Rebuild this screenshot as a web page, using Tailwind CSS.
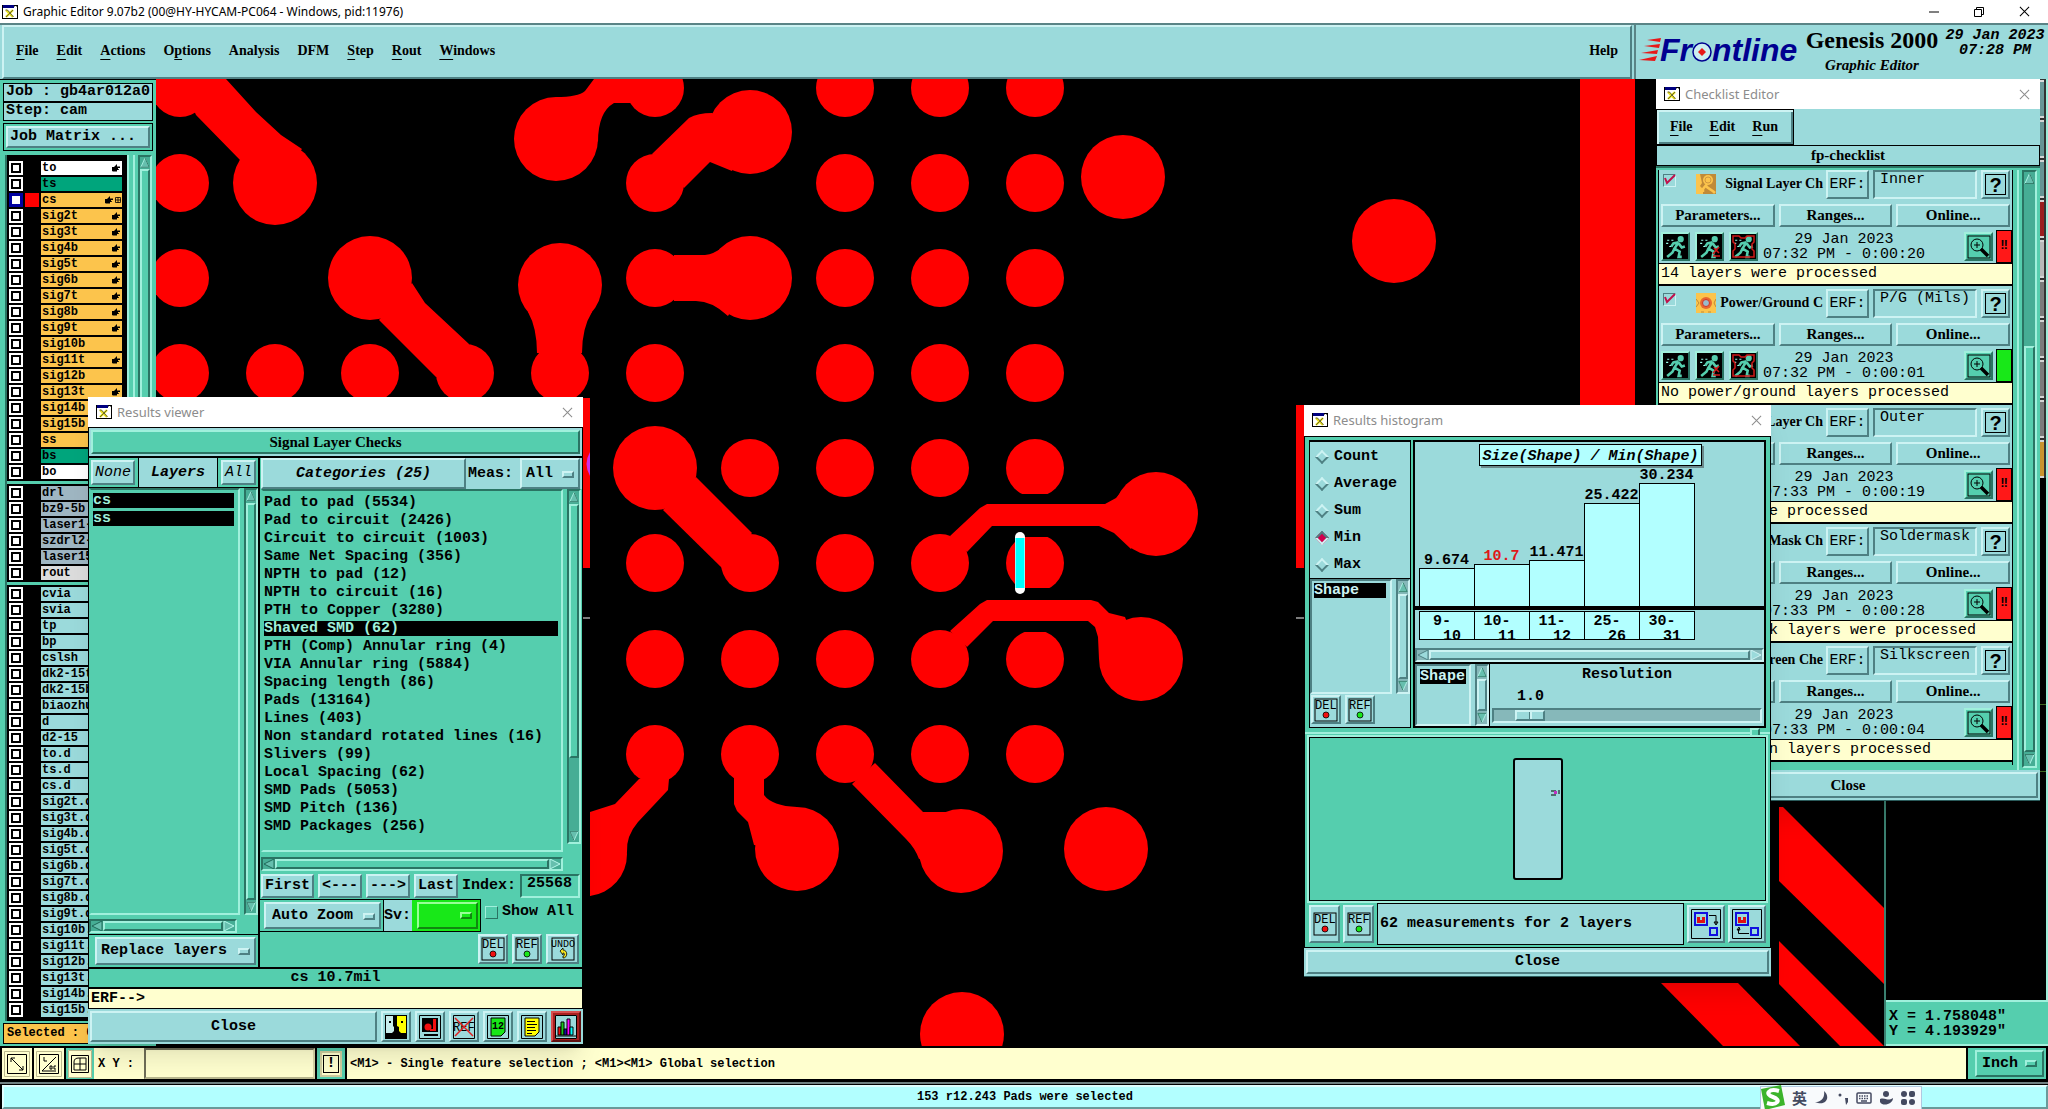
<!DOCTYPE html>
<html lang="en">

<head>
    <meta charset="UTF-8">
    <meta name="viewport" content="width=device-width, initial-scale=1.0">
    <title>Graphic Editor 9.07b2</title>
    <script src="https://cdn.jsdelivr.net/npm/@tailwindcss/browser@4"></script>
</head>

<body class="h-screen overflow-hidden bg-black text-black flex flex-col relative font-['Liberation_Mono',monospace] text-[15px] leading-[18px]">

    <!-- shared icons -->
    <svg class="hidden">
        <symbol id="i-app" viewBox="0 0 16 14">
            <rect x=".5" y=".5" width="15" height="13" fill="#fff" stroke="#000" />
            <rect x="1" y="0" width="11" height="3" fill="#00007f" />
            <rect x="12" y="1" width="1" height="1" fill="#888" /><rect x="14" y="1" width="1" height="1" fill="#888" />
            <path d="M4 5l7 7M11 5l-7 7" stroke="#e8e020" stroke-width="2.4" />
            <path d="M3.500 5h2l6 7M11 5l-7 7" stroke="#333" stroke-width=".7" fill="none" />
        </symbol>
        <symbol id="i-close" viewBox="0 0 12 12">
            <path d="M1 1l10 10M11 1L1 11" stroke="currentColor" stroke-width="1.100" />
        </symbol>
        <symbol id="i-hand" viewBox="0 0 8 8">
            <path d="M0 3h2l3-3v2.500h3v1.500H6v1h.8V6H5v1.500H1L0 7z" />
        </symbol>
        <symbol id="i-del" viewBox="0 0 24 24">
            <rect x="1" y="1" width="22" height="22" fill="none" stroke="#000" />
            <text x="1" y="11" font-size="12" font-weight="normal" font-family="Liberation Mono">DEL</text>
            <circle cx="12" cy="17" r="3" fill="#f01010" stroke="#000" stroke-width=".8" />
        </symbol>
        <symbol id="i-ref" viewBox="0 0 24 24">
            <rect x="1" y="1" width="22" height="22" fill="none" stroke="#000" />
            <text x="1" y="11" font-size="12" font-weight="normal" font-family="Liberation Mono">REF</text>
            <circle cx="12" cy="17" r="3" fill="#18e818" stroke="#000" stroke-width=".8" />
        </symbol>
        <symbol id="i-undo" viewBox="0 0 24 24">
            <rect x="1" y="1" width="22" height="22" fill="none" stroke="#000" />
            <text x="0" y="10" font-size="10" font-weight="normal" font-family="Liberation Mono">UNDO</text>
            <path d="M9 14l3-3v2c5 0 5 8 0 8v-2c2 0 2-3 0-3v2z" fill="#f0e020" stroke="#000" stroke-width=".8" />
        </symbol>
        <symbol id="i-run" viewBox="0 0 24 24">
            <rect width="24" height="24" fill="#000" />
            <g stroke="#55ceae" fill="none" stroke-width="2">
                <circle cx="17" cy="5" r="2" fill="#55ceae" />
                <path d="M15 8l-5 1-2 3M15 8l-4 6 5 3-1 5h3M11 14l-2 4-5 4M15 9l3 4 3-1" stroke-width="2.500" />
            </g>
            <path d="M4 6h2M8 6h2M3 9h2M6 12h2" stroke="#9fe" />
        </symbol>
        <symbol id="i-zoom" viewBox="0 0 24 24">
            <rect x="1" y="1" width="22" height="22" fill="none" stroke="#000" />
            <circle cx="10" cy="10" r="6" fill="none" stroke="#000" />
            <path d="M7 10h6M10 7v6" stroke="#000" />
            <path d="M14 14l7 7" stroke="#000" stroke-width="3.500" />
        </symbol>
        <symbol id="i-copper" viewBox="0 0 20 20">
            <rect width="20" height="20" fill="#c08a38" />
            <path d="M0 0h4l2 9-2 3 3 3v5H0z" fill="#fcc44c" />
            <path d="M7 18v-3l4-5M10 12c2 3 5 3 9 7" stroke="#fcc44c" stroke-width="2.500" fill="none" />
            <circle cx="12" cy="6" r="5" fill="#fcc44c" />
            <circle cx="12" cy="6" r="3" fill="#fcc44c" stroke="#d09840" />
        </symbol>
        <symbol id="i-power" viewBox="0 0 20 20">
            <rect width="20" height="20" fill="#fcc44c" />
            <circle cx="10" cy="10" r="6" fill="#e86830" />
            <circle cx="10" cy="10" r="3.500" fill="#9bc" stroke="#d83020" />
            <path d="M0 6l3 4-3 4M20 6l-2 4 2 4M5 19h3M12 19h3" stroke="#c08a38" fill="none" />
        </symbol>
        <symbol id="i-up" viewBox="0 0 12 14">
            <path d="M6 1L1 12h10z" fill="#66bfae" stroke="#b4f8ea" />
            <path d="M6 1l5 11H1" fill="none" stroke="#1f6a58" />
        </symbol>
    </svg>

    <!-- window title -->
    <header class="h-[23px] shrink-0 bg-white flex items-center pl-[2px] pr-[18px] font-['Noto_Sans',sans-serif] text-[12px]">
        <svg class="w-4 h-[14px] mr-[5px]"><use href="#i-app" /></svg>
        <h1>Graphic Editor 9.07b2 (00@HY-HYCAM-PC064 - Windows, pid:11976)</h1>
        <div class="ml-auto flex items-center gap-[35px]">
            <button aria-label="Minimize"><svg class="w-[10px] h-[10px]"><path d="M0 5h10" stroke="#000" /></svg></button>
            <button aria-label="Restore"><svg class="w-[10px] h-[10px]" fill="none" stroke="#000"><path d="M.5 2.500h7v7h-7zM2.500 2V.5h7v7H8" /></svg></button>
            <button aria-label="Close"><svg class="w-[11px] h-[11px]"><use href="#i-close" /></svg></button>
        </div>
    </header>

    <!-- menu bar and logo -->
    <div class="h-[56px] shrink-0 flex bg-[#9bdadb] border-t-2 border-[#5a8486]">
        <nav class="flex-1 flex items-center gap-[18px] pl-[12px] pr-[12px] pb-[2px] ml-[2px] font-['Liberation_Serif',serif] font-bold text-[14px] border-2 [border-color:#cdf3f3_#4e8083_#4e8083_#cdf3f3]">
            <a href="#"><u class="underline-offset-4">F</u>ile</a>
            <a href="#"><u class="underline-offset-4">E</u>dit</a>
            <a href="#"><u class="underline-offset-4">A</u>ctions</a>
            <a href="#">O<u class="underline-offset-4">p</u>tions</a>
            <a href="#">Analysis</a>
            <a href="#">DFM</a>
            <a href="#"><u class="underline-offset-4">S</u>tep</a>
            <a href="#"><u class="underline-offset-4">R</u>out</a>
            <a href="#"><u class="underline-offset-4">W</u>indows</a>
            <a href="#" class="ml-auto">Help</a>
        </nav>
        <div class="w-[414px] flex pt-[2px] pl-[3px] border-l-2 border-[#5a8486] ml-[2px] font-bold">
            <svg class="w-[163px] h-[40px] mt-[4px]" viewBox="0 0 163 40">
                <g fill="#e81818">
                    <path d="M8 9l14-2-1 4zM5 15l16-2-1 4zM2 22l17-3-1 4zM0 29l18-4-2 5z" />
                </g>
                <g font-family="Liberation Sans" font-weight="bold" font-style="italic" font-size="32" fill="#000090">
                    <text x="21" y="30">Fr</text><text x="73" y="30">ntline</text>
                </g>
                <circle cx="63" cy="21" r="9" fill="#cdeef0" stroke="#000090" stroke-width="1.500" />
                <path d="M63 17l4 4-4 4-4-4z" fill="#e81818" />
            </svg>
            <div class="w-[140px] font-['Liberation_Serif',serif] text-center">
                <p class="text-[24px] leading-[26px]">Genesis 2000</p>
                <p class="text-[15px] italic leading-[24px]">Graphic Editor</p>
            </div>
            <p class="italic leading-[15px] text-center flex-1 pt-[1px]">29 Jan 2023<br>07:28 PM</p>
        </div>
    </div>

    <main class="flex-1 min-h-0 flex">
        <!-- layers -->
        <aside class="w-[156px] shrink-0 bg-[#55ceae] flex flex-col px-[3px] pt-[3px] pb-[2px] border-t border-black font-bold">
            <p class="h-[19px] bg-[#9bdadb] border border-black pl-[2px] whitespace-nowrap leading-[16px]">Job : gb4ar012a0</p>
            <p class="h-[19px] bg-[#9bdadb] border border-black pl-[2px] leading-[16px]">Step: cam</p>
            <div class="mt-[2px] p-[2px] border border-black">
                <button class="w-full h-[22px] text-left pl-[2px] bg-[#9bdadb] border-2 [border-color:#cdf3f3_#4e8083_#4e8083_#cdf3f3] leading-[18px]">Job Matrix ...</button>
            </div>
            <div class="flex-1 min-h-0 flex mt-[4px]">
                <div id="layers" class="w-[122px] overflow-hidden bg-black border-l-2 border-[#2a7463] text-[12px] leading-[14px] pt-[6px] ml-[2px]"></div>
                <div class="w-[8px] border-x-2 border-[#a0f0dc]"></div>
                <div class="w-[14px] ml-[3px] border-2 [border-color:#2a7463_#a0f0dc_#a0f0dc_#2a7463] bg-[#46ad95] flex flex-col">
                    <svg class="h-[12px] w-[10px]"><use href="#i-up" /></svg>
                    <div class="flex-1 bg-[#55ceae] border-2 [border-color:#a0f0dc_#2a7463_#2a7463_#a0f0dc]"></div>
                </div>
            </div>
            <p class="h-[21px] shrink-0 mt-[2px] bg-[#fcc44c] border border-black pl-[3px] text-[12px]">Selected : 0</p>
        </aside>

        <!-- board -->
        <div class="flex-1 min-w-0 bg-black">
            <svg class="w-full h-full block" viewBox="156 79 1728 967" preserveAspectRatio="xMinYMin slice">
                <g fill="#f00">
                    <g id="pads"></g>
                    <path d="M180 79H226L256 112 281 135 302 149 275 183 240 160 196 115z" />
                    <path d="M412 283L425 303 469 344 464 373 436 377 379 320z" />
                    <path d="M528 312Q537 328 537 353H582Q582 328 592 312z" />
                    <path d="M556 97Q578 97 585 91L594 79H655L640 103H614Q598 112 598 142z" />
                    <path d="M652 154L689 118Q698 113 712 113L750 132 732 171 710 162 684 188z" />
                    <path d="M674 255H705Q714 254 723 247L750 278 728 316Q712 301 696 301H674z" />
                    <path d="M696 477L752 533 722 568 663 510z" />
                    <path d="M950 536L980 508 987 504H1105L1116 498 1125 487 1156 514 1131 549 1114 533 1099 526H992L967 552z" />
                    <path d="M950 631L980 604 987 600H1091L1098 602 1109 613 1125 617 1141 659H1099L1098 637 1095 627 1088 621H993L967 647z" />
                    <path d="M639 779L615 804 590 812V896L627 852Q626 836 638 822L668 790 669 779z" />
                    <path d="M590 812a42 42 0 0 1 37 42a42 42 0 0 1-37 42z" />
                    <path d="M734 775V804L737 811 748 822 754 845 797 850V807Q772 806 764 795V775z" />
                    <path d="M875 763L923 812H946L960 851 919 859Q915 848 906 839L852 784z" />
                    <path d="M1580 79h55v400h-55z" />
                    <path d="M583 398h7v170h-7zM1296 405h8v163h-8z" />
                    <path d="M1779 807h4L1884 908V984L1779 881z" />
                    <path d="M1779 941L1884 1046H1840L1779 984z" />
                    <path d="M1661 983h77l62 63h-77z" />
                </g>
                <g fill="#000">
                    <path d="M1010 494h50v6h-50zM1010 531h50v6h-50zM1010 588h50v6h-50zM1010 626h50v6h-50z" />
                </g>
                <path d="M1020 537v52" stroke="#fff" stroke-width="10" stroke-linecap="round" />
                <path d="M1020 538v50" stroke="#0ff" stroke-width="9" />
                <path d="M590 452q-7 12 0 24z" fill="#d030f0" />
                <path d="M583 618h7M1296 618h8" stroke="#fff" />
            </svg>
        </div>

        <!-- toolbox and position -->
        <aside class="w-[164px] shrink-0 flex flex-col border-l-2 border-[#3a8070]">
            <div class="flex-1 border-r-2 border-[#a0f0dc]">
                <div id="tools" class="ml-auto w-[7px] bg-[#333] pt-[1px]"></div>
                <div class="mt-[226px] h-[68px] ml-auto w-3 border-y border-[#3d6a20]"></div>
            </div>
            <div class="h-[46px] shrink-0 bg-[#55ceae] border-y-2 border-[#a0f0dc] pl-[3px] pt-[7px] leading-[15px] font-bold whitespace-pre">X = 1.758048"
Y = 4.193929"</div>
        </aside>
    </main>

    <!-- command line -->
    <div class="h-[38px] shrink-0 bg-black pt-[2px] pb-[3px] pl-[2px] pr-[2px] flex gap-[2px] border-b-2 border-[#6f8080] font-bold text-[12px]">
        <button aria-label="Snap" class="w-[30px] bg-[#ffffcf] p-[2px] flex items-center justify-center"><svg class="w-[26px] h-[26px]" fill="none" stroke="#000"><path d="M.5 .5h25v25H.5z" stroke="#bbb98e" /><path d="M3.500 3.500h19v19h-19zM7 7l12 12M7 11V7h4M15 19h4v-4" /></svg></button>
        <button aria-label="Angle" class="w-[30px] bg-[#ffffcf] p-[2px] flex items-center justify-center"><svg class="w-[26px] h-[26px]" fill="none" stroke="#000"><path d="M.5 .5h25v25H.5z" stroke="#bbb98e" /><path d="M3.500 3.500h19v19h-19zM6 20L20 6M6 20h14M8 6v4h3M14 15h2v3h-2zM20 15h-2v3h2" /></svg></button>
        <button aria-label="Grid" class="w-[28px] bg-[#55ceae] flex items-center justify-center"><svg class="w-[24px] h-[28px] bg-[#ffffcf]" fill="none" stroke="#000"><path d="M.5 .5h23v27H.5z" stroke="#bbb98e" /><path d="M3.500 5.500h17v17h-17zM6 12c0-3 2-4 5-4h7v12H6zM6 14h12M12 8v12" /></svg></button>
        <div class="flex -ml-[2px] bg-[#ffffcf] flex-none w-[221px]">
            <label for="xy" class="w-[48px] pl-[4px] leading-[32px] whitespace-nowrap">X Y :</label>
            <input id="xy" type="text" class="ml-auto w-[171px] bg-[#ffffcf] border-2 [border-color:#6f6e58_#d8d7a8_#b8b78e_#6f6e58] outline-none px-1">
        </div>
        <button aria-label="Message" class="w-[28px] bg-[#55ceae] flex items-center justify-center"><span class="w-[22px] h-[26px] bg-[#ffffcf] border-2 border-[#cfce9f] flex items-center justify-center"><span class="border border-black w-[16px] h-[18px] leading-[16px] text-[15px]">!</span></span></button>
        <p class="flex-1 bg-[#ffffcf] pl-[3px] leading-[32px]">&lt;M1&gt; - Single feature selection ; &lt;M1&gt;&lt;M1&gt; Global selection</p>
        <div class="w-[78px] bg-[#55ceae] p-[2px] pl-[7px] relative">
            <select aria-label="Units" class="appearance-none w-full h-full pl-[5px] font-bold text-[15px] bg-[#55ceae] border-2 [border-color:#a0f0dc_#2a7463_#2a7463_#a0f0dc]"><option>Inch</option></select>
            <span class="absolute right-[9px] top-[12px] w-[12px] h-[7px] border-2 [border-color:#a0f0dc_#2a7463_#2a7463_#a0f0dc]"></span>
        </div>
    </div>
    <footer class="h-[25px] shrink-0 flex relative border-t border-black pl-[2px]">
        <p class="flex-1 bg-[#b2ffff] border-2 [border-color:#e0ffff_#6a9a9a_#6a9a9a_#e0ffff] text-center font-bold text-[12px] leading-[20px]">153 r12.243 Pads were selected</p>
        <div class="absolute right-[126px] top-[1px] h-[24px] w-[162px] bg-[#f8fafc] border border-[#b0c8e0] flex items-center justify-between pl-[31px] pr-[6px] font-['Noto_Sans_CJK_SC',sans-serif] font-bold text-[15px] text-[#444a60]">
            <svg class="absolute -left-[2px] -top-[3px] w-[27px] h-[27px]"><path d="M2 5l20-4 4 20-20 5z" fill="#3cb42c" /><path d="M20 7c-10-3-15 3-6 6s4 9-6 6" fill="none" stroke="#fff" stroke-width="4" /></svg>
            <span>英</span>
            <svg class="w-[14px] h-[14px]" fill="#444a60"><path d="M9 0c7 6 2 16-9 11c7 0 10-5 9-11z" /></svg>
            <svg class="w-[11px] h-[14px]" fill="#444a60"><circle cx="3" cy="4" r="1.500" /><path d="M8 7h3v4l-2 3z" /></svg>
            <svg class="w-[16px] h-[12px]" fill="none" stroke="#444a60" stroke-width="1.500"><rect x="1" y="1" width="14" height="10" rx="1" /><path d="M3 4h10M3 6.500h10" stroke-dasharray="1.500 1" /><path d="M5 9h6" /></svg>
            <svg class="w-[13px] h-[14px]" fill="#444a60"><circle cx="6" cy="3" r="3" /><path d="M0 8c6-2 7 3 13-1c0 6-10 9-13 4z" /></svg>
            <svg class="w-[14px] h-[14px]" fill="#444a60"><circle cx="3" cy="3" r="3" /><rect x="8" y="0" width="6" height="6" rx="2" /><rect x="0" y="8" width="6" height="6" rx="2" /><circle cx="11" cy="11" r="3" /></svg>
        </div>
    </footer>

    <!-- Checklist Editor -->
    <section class="absolute left-[1656px] top-[79px] w-[384px] bg-[#9bdadb] shadow-xl flex flex-col border-b border-[#2a5a5a]">
        <div class="h-[30px] bg-white flex items-center px-2 text-[#8c8c8c] font-['Noto_Sans',sans-serif] text-[13px]">
            <svg class="w-4 h-[14px] mr-[5px]"><use href="#i-app" /></svg>
            <h2>Checklist Editor</h2>
            <button aria-label="Close" class="ml-auto mr-[2px]"><svg class="w-[11px] h-[11px]"><use href="#i-close" /></svg></button>
        </div>
        <nav class="w-[138px] h-[36px] flex items-center gap-[17px] pl-[13px] font-['Liberation_Serif',serif] font-bold text-[14px] border border-black shadow-[inset_2px_2px_#cdf3f3,inset_-2px_-2px_#4e8083]">
            <a href="#"><u class="underline-offset-4">F</u>ile</a>
            <a href="#"><u class="underline-offset-4">E</u>dit</a>
            <a href="#"><u class="underline-offset-4">R</u>un</a>
        </nav>
        <p class="h-[21px] border border-black text-center font-['Liberation_Serif',serif] font-bold leading-[19px]">fp-checklist</p>
        <div class="flex bg-[#55ceae] border-t-2 border-[#2a7463] pt-[2px] pl-[2px] pr-[3px]">
            <div class="flex-1 pb-[5px] border-r-2 border-[#a0f0dc] pr-[4px]">
                <div id="checks" class="border-x border-black"></div>
            </div>
            <div class="w-[15px] ml-[3px] mb-[2px] border-2 [border-color:#2a7463_#a0f0dc_#a0f0dc_#2a7463] bg-[#46ad95] flex flex-col">
                <svg class="h-[14px] w-[11px]"><use href="#i-up" /></svg>
                <div class="h-[160px]"></div>
                <div class="flex-1 bg-[#55ceae] border-2 [border-color:#a0f0dc_#2a7463_#2a7463_#a0f0dc]"></div>
                <svg class="h-[14px] w-[11px] rotate-180"><use href="#i-up" /></svg>
            </div>
        </div>
        <button class="h-[26px] m-[2px] border-2 [border-color:#cdf3f3_#4e8083_#4e8083_#cdf3f3] font-['Liberation_Serif',serif] font-bold leading-[20px]">Close</button>
    </section>

    <!-- Results viewer -->
    <section class="absolute left-[88px] top-[397px] w-[495px] bg-[#9bdadb] shadow-xl flex flex-col font-bold">
        <div class="h-[30px] bg-white flex items-center px-2 text-[#8c8c8c] font-['Noto_Sans',sans-serif] text-[13px] font-normal">
            <svg class="w-4 h-[14px] mr-[5px]"><use href="#i-app" /></svg>
            <h2>Results viewer</h2>
            <button aria-label="Close" class="ml-auto mr-[2px]"><svg class="w-[11px] h-[11px]"><use href="#i-close" /></svg></button>
        </div>
        <div class="border-x border-t border-black p-[2px]">
            <p class="h-[24px] bg-[#55ceae] border-2 [border-color:#a0f0dc_#2a7463_#2a7463_#a0f0dc] text-center font-['Liberation_Serif',serif] leading-[20px]">Signal Layer Checks</p>
        </div>
        <div class="flex border-x border-t-2 border-black h-[511px]">
            <!-- layer list -->
            <div class="w-[171px] shrink-0 flex flex-col bg-[#55ceae] border-r-2 border-black">
                <div class="flex h-[30px] border-b border-black italic">
                    <button class="m-[2px] w-[44px] bg-[#9bdadb] border-2 [border-color:#cdf3f3_#4e8083_#4e8083_#cdf3f3] font-normal">None</button>
                    <p class="flex-1 mx-[1px] border-x border-black bg-[#9bdadb] text-center leading-[29px]">Layers</p>
                    <button class="m-[2px] w-[35px] bg-[#9bdadb] border-2 [border-color:#cdf3f3_#4e8083_#4e8083_#cdf3f3] font-normal">All</button>
                </div>
                <div class="flex flex-1">
                    <ul class="flex-1 pl-[2px] pr-[4px] pt-[3px] space-y-[3px] text-[#a0f0dc] leading-[15px] border-2 [border-color:#2a7463_#a0f0dc_#a0f0dc_#55ceae]">
                        <li class="bg-black">cs</li>
                        <li class="bg-black">ss</li>
                    </ul>
                    <div class="w-[14px] ml-[4px] border-2 [border-color:#2a7463_#a0f0dc_#a0f0dc_#2a7463] bg-[#46ad95] flex flex-col">
                        <svg class="h-[13px] w-[10px]"><use href="#i-up" /></svg>
                        <div class="flex-1 bg-[#55ceae] border-2 [border-color:#a0f0dc_#2a7463_#2a7463_#a0f0dc]"></div>
                        <svg class="h-[13px] w-[10px] rotate-180"><use href="#i-up" /></svg>
                    </div>
                </div>
                <div class="h-[14px] mt-[4px] mb-[1px] mr-[21px] border-2 [border-color:#2a7463_#a0f0dc_#a0f0dc_#2a7463] bg-[#46ad95] flex">
                    <svg class="w-[12px] h-[10px]"><path d="M11 0L1 5l10 5z" fill="#66bfae" stroke="#1f6a58" /></svg>
                    <div class="flex-1 bg-[#55ceae] border-2 [border-color:#a0f0dc_#2a7463_#2a7463_#a0f0dc]"></div>
                    <svg class="w-[12px] h-[10px]"><path d="M1 0l10 5-10 5z" fill="#66bfae" stroke="#b4f8ea" /></svg>
                </div>
                <div class="h-[33px] border-t border-black p-[2px] pl-[6px] relative">
                    <select aria-label="Replace" class="appearance-none w-full h-full pl-[4px] bg-[#9bdadb] border-2 [border-color:#cdf3f3_#4e8083_#4e8083_#cdf3f3]"><option>Replace layers</option></select>
                    <span class="absolute right-[8px] top-[13px] w-[12px] h-[7px] border-2 [border-color:#cdf3f3_#4e8083_#4e8083_#cdf3f3]"></span>
                </div>
            </div>
            <!-- categories -->
            <div class="flex-1 min-w-0 flex flex-col bg-[#55ceae] pl-[1px]">
                <div class="flex h-[31px] bg-[#9bdadb]">
                    <p class="w-[205px] border-2 [border-color:#cdf3f3_#4e8083_#4e8083_#cdf3f3] text-center italic leading-[28px]">Categories (25)</p>
                    <label for="meas" class="pl-[2px] flex-1 leading-[32px]">Meas:</label>
                    <div class="relative w-[60px] mr-[2px]">
                        <select id="meas" class="appearance-none w-full h-full pl-[4px] bg-[#9bdadb] border-2 [border-color:#cdf3f3_#4e8083_#4e8083_#cdf3f3]"><option>All</option></select>
                        <span class="absolute right-[6px] top-[13px] w-[12px] h-[7px] border-2 [border-color:#cdf3f3_#4e8083_#4e8083_#cdf3f3]"></span>
                    </div>
                </div>
                <div class="flex flex-1">
                    <ul id="categories" class="flex-1 pl-[1px] pr-[3px] pt-[4px] border-2 [border-color:#2a7463_#a0f0dc_#a0f0dc_#55ceae] whitespace-nowrap"></ul>
                    <div class="w-[14px] ml-[4px] mr-[1px] mb-[8px] border-2 [border-color:#2a7463_#a0f0dc_#a0f0dc_#2a7463] bg-[#46ad95] flex flex-col">
                        <svg class="h-[13px] w-[10px]"><use href="#i-up" /></svg>
                        <div class="h-[254px] bg-[#55ceae] border-2 [border-color:#a0f0dc_#2a7463_#2a7463_#a0f0dc]"></div>
                        <svg class="h-[13px] w-[10px] rotate-180 mt-auto"><use href="#i-up" /></svg>
                    </div>
                </div>
                <div class="h-[14px] mt-[5px] mr-[19px] border-2 [border-color:#2a7463_#a0f0dc_#a0f0dc_#2a7463] bg-[#46ad95] flex">
                    <svg class="w-[12px] h-[10px]"><path d="M11 0L1 5l10 5z" fill="#66bfae" stroke="#1f6a58" /></svg>
                    <div class="flex-1 bg-[#55ceae] border-2 [border-color:#a0f0dc_#2a7463_#2a7463_#a0f0dc]"></div>
                    <svg class="w-[12px] h-[10px]"><path d="M1 0l10 5-10 5z" fill="#66bfae" stroke="#b4f8ea" /></svg>
                </div>
                <div class="flex gap-[4px] h-[24px] mt-[3px] pr-[2px]">
                    <button class="w-[53px] bg-[#9bdadb] border-2 [border-color:#cdf3f3_#4e8083_#4e8083_#cdf3f3]">First</button>
                    <button class="w-[44px] bg-[#9bdadb] border-2 [border-color:#cdf3f3_#4e8083_#4e8083_#cdf3f3]">&lt;---</button>
                    <button class="w-[44px] bg-[#9bdadb] border-2 [border-color:#cdf3f3_#4e8083_#4e8083_#cdf3f3]">---&gt;</button>
                    <button class="w-[44px] bg-[#9bdadb] border-2 [border-color:#cdf3f3_#4e8083_#4e8083_#cdf3f3]">Last</button>
                    <label for="index" class="leading-[24px]">Index:</label>
                    <input id="index" type="text" value="25568" class="ml-auto w-[60px] pl-[5px] pb-[4px] bg-[#55ceae] border-2 [border-color:#2a7463_#a0f0dc_#a0f0dc_#2a7463] leading-[18px]">
                </div>
                <div class="flex h-[33px] mt-[1px]">
                    <div class="flex border border-black w-[222px] -ml-[2px]">
                        <div class="relative w-[124px] p-[2px] pl-[4px] border-r border-black">
                            <select aria-label="Zoom mode" class="appearance-none w-full h-full pl-[6px] bg-[#9bdadb] border-2 [border-color:#cdf3f3_#4e8083_#4e8083_#cdf3f3]"><option>Auto Zoom</option></select>
                            <span class="absolute right-[8px] top-[13px] w-[12px] h-[7px] border-2 [border-color:#cdf3f3_#4e8083_#4e8083_#cdf3f3]"></span>
                        </div>
                        <label for="sv" class="w-[28px] bg-[#9bdadb] leading-[31px]">Sv:</label>
                        <div class="relative flex-1 bg-[#18e818] p-[2px] pl-[5px]">
                            <select id="sv" class="appearance-none w-full h-full bg-[#18e818] border-2 [border-color:#98ff98_#108810_#108810_#98ff98]"><option></option></select>
                            <span class="absolute right-[8px] top-[12px] w-[12px] h-[7px] border-2 [border-color:#98ff98_#108810_#108810_#98ff98]"></span>
                        </div>
                    </div>
                    <label class="flex items-center h-[26px] pl-[4px] gap-[4px] whitespace-nowrap"><input type="checkbox" class="appearance-none w-[13px] h-[13px] border [border-color:#a0f0dc_#2a7463_#2a7463_#a0f0dc]">Show All</label>
                </div>
                <div class="flex justify-end gap-[4px] pr-[3px] mt-[2px] h-[33px]">
                    <button aria-label="Delete" class="w-[30px] h-[30px] flex items-center justify-center bg-[#9bdadb] border-2 [border-color:#cdf3f3_#4e8083_#4e8083_#cdf3f3]"><svg class="w-[24px] h-[24px]"><use href="#i-del" /></svg></button>
                    <button aria-label="Reference" class="w-[30px] h-[30px] flex items-center justify-center bg-[#9bdadb] border-2 [border-color:#cdf3f3_#4e8083_#4e8083_#cdf3f3]"><svg class="w-[24px] h-[24px]"><use href="#i-ref" /></svg></button>
                    <button aria-label="Undo" class="w-[33px] h-[30px] flex items-center justify-center bg-[#9bdadb] border-2 [border-color:#cdf3f3_#4e8083_#4e8083_#cdf3f3]"><svg class="w-[24px] h-[24px]"><use href="#i-undo" /></svg></button>
                </div>
            </div>
        </div>
        <p class="h-[22px] bg-[#55ceae] border-x border-y-2 border-black text-center leading-[18px]">cs 10.7mil</p>
        <p class="h-[20px] bg-[#ffffcf] border-x border-b border-black pl-[2px] leading-[20px]">ERF--&gt;</p>
        <div class="flex gap-[4px] p-[2px] h-[35px]">
            <button class="flex-1 border-2 [border-color:#cdf3f3_#4e8083_#4e8083_#cdf3f3]">Close</button>
            <button aria-label="Contrast" class="w-[30px] flex items-center justify-center border-2 [border-color:#cdf3f3_#4e8083_#4e8083_#cdf3f3]"><svg class="w-[22px] h-[24px]"><path d="M0 0h22v24H0z" /><path d="M1 1h7v10l1 1v4l-2 2H1z" fill="#c8ecec" /><path d="M12 1h9v17h-5l-2-2v-4l-2-1z" fill="#ff0" /><path d="M4 6h2v2H4zM16 6h2v2h-2z" /></svg></button>
            <button aria-label="Record" class="w-[30px] flex items-center justify-center border-2 [border-color:#cdf3f3_#4e8083_#4e8083_#cdf3f3]"><svg class="w-[22px] h-[24px]"><path d="M.5 .5h21v23H.5z" fill="#9bdadb" stroke="#000" /><path d="M3 3h16v14H3zM5 19h14v2H5z" /><circle cx="9" cy="12" r="3.500" fill="#f01010" /><path d="M14 4h3v12h-6v-2h3z" fill="#f01010" /></svg></button>
            <button aria-label="No reference" class="w-[30px] flex items-center justify-center border-2 [border-color:#cdf3f3_#4e8083_#4e8083_#cdf3f3]"><svg class="w-[24px] h-[24px]"><path d="M1.500 .5h21v23h-21z" fill="none" stroke="#000" /><text x="1" y="16" font-size="12" font-weight="normal">REF</text><path d="M3 3l18 18M21 3L3 21" stroke="#e02020" stroke-width="1.500" /></svg></button>
            <button aria-label="Numbers" class="w-[30px] flex items-center justify-center border-2 [border-color:#cdf3f3_#4e8083_#4e8083_#cdf3f3]"><svg class="w-[22px] h-[24px]"><path d="M.5 .5h21v23H.5z" fill="none" stroke="#000" /><path d="M4 3h14v14l-4 4H4z" fill="#18e818" stroke="#000" /><text x="5" y="14" font-size="10">12</text></svg></button>
            <button aria-label="Notes" class="w-[30px] flex items-center justify-center border-2 [border-color:#cdf3f3_#4e8083_#4e8083_#cdf3f3]"><svg class="w-[22px] h-[24px]"><path d="M.5 .5h21v23H.5z" fill="none" stroke="#000" /><path d="M4 3h14v14l-4 4H4z" fill="#ff0" stroke="#000" /><path d="M6 6.500h8M6 9.500h10M6 12.500h8M6 15.500h9M6 18.500h5" stroke="#000" /></svg></button>
            <button aria-label="Histogram" class="w-[30px] flex items-center justify-center bg-[#a82020] border-2 [border-color:#d85050_#601010_#601010_#d85050]"><svg class="w-[22px] h-[24px] bg-[#9bdadb]" stroke="#000"><path d="M.5 .5h21v23H.5z" fill="none" /><path d="M3 12h3v8H3z" fill="#f01010" /><path d="M6 7h3v13H6z" fill="#18c818" /><path d="M9 14h3v6H9z" fill="#1010a0" /><path d="M12 4h3v16h-3z" fill="#f0f" /><path d="M15 12h3v8h-3z" fill="#0ff" /><path d="M1 21h20" /></svg></button>
        </div>
    </section>

    <!-- Results histogram -->
    <section class="absolute left-[1304px] top-[405px] w-[467px] bg-[#55ceae] shadow-xl flex flex-col">
        <div class="h-[31px] bg-white flex items-center px-2 pb-[1px] text-[#8c8c8c] font-['Noto_Sans',sans-serif] text-[13px]">
            <svg class="w-4 h-[14px] mr-[5px]"><use href="#i-app" /></svg>
            <h2>Results histogram</h2>
            <button aria-label="Close" class="ml-auto mr-[1px]"><svg class="w-[11px] h-[11px]"><use href="#i-close" /></svg></button>
        </div>
        <div class="border border-black pt-[3px] px-[4px] flex flex-col h-[512px]">
            <div class="flex gap-[2px] h-[288px]">
                <div class="w-[102px] bg-[#9bdadb] border border-black flex flex-col">
                    <fieldset id="stats" class="h-[138px] pt-[1px] border-t border-b border-black font-bold"></fieldset>
                    <div class="flex h-[115px]">
                        <div class="w-[82px] p-[2px] border-2 [border-color:#4e8083_#cdf3f3_#cdf3f3_#4e8083]"><p class="bg-black text-[#cdf3f3] w-[72px] leading-[15px] font-bold">Shape</p></div>
                        <div class="w-[14px] ml-[4px] border-2 [border-color:#4e8083_#cdf3f3_#cdf3f3_#4e8083] bg-[#86b8ba] flex flex-col">
                            <svg class="h-[13px] w-[10px]"><use href="#i-up" /></svg>
                            <div class="flex-1 bg-[#9bdadb] border-2 [border-color:#cdf3f3_#4e8083_#4e8083_#cdf3f3]"></div>
                            <svg class="h-[13px] w-[10px] rotate-180"><use href="#i-up" /></svg>
                        </div>
                    </div>
                    <div class="flex gap-[4px] pl-[1px] pt-[1px]">
                        <button aria-label="Delete" class="w-[30px] h-[29px] flex items-center justify-center border-2 [border-color:#cdf3f3_#4e8083_#4e8083_#cdf3f3]"><svg class="w-[24px] h-[24px]"><use href="#i-del" /></svg></button>
                        <button aria-label="Reference" class="w-[30px] h-[29px] flex items-center justify-center border-2 [border-color:#cdf3f3_#4e8083_#4e8083_#cdf3f3]"><svg class="w-[24px] h-[24px]"><use href="#i-ref" /></svg></button>
                    </div>
                </div>
                <div class="flex-1 bg-[#9bdadb] border-2 border-black flex flex-col">
                    <p class="w-[223px] h-[22px] mt-[2px] ml-[64px] bg-[#b2ffff] border border-black shadow-[2px_2px_#6a8a8c] text-center font-bold italic leading-[24px] whitespace-nowrap">Size(Shape) / Min(Shape)</p>
                    <div id="bars" class="flex-1 flex items-end px-[4px] border-b-4 border-black"></div>
                    <div id="ranges" class="flex px-[4px] mt-[1px] h-[29px] font-bold leading-[15px]"></div>
                    <div class="h-[14px] mt-[8px] border-2 [border-color:#4e8083_#cdf3f3_#cdf3f3_#4e8083] bg-[#86b8ba] flex">
                        <svg class="w-[12px] h-[10px]"><path d="M11 0L1 5l10 5z" fill="#9bdadb" stroke="#4e8083" /></svg>
                        <div class="flex-1 bg-[#9bdadb] border-2 [border-color:#cdf3f3_#4e8083_#4e8083_#cdf3f3]"></div>
                        <svg class="w-[12px] h-[10px]"><path d="M1 0l10 5-10 5z" fill="#9bdadb" stroke="#cdf3f3" /></svg>
                    </div>
                    <div class="flex h-[64px] border-t-2 border-black">
                        <div class="w-[56px] p-[3px] border-2 [border-color:#4e8083_#cdf3f3_#cdf3f3_#4e8083]"><p class="bg-black text-[#cdf3f3] w-[46px] leading-[15px] font-bold">Shape</p></div>
                        <div class="w-[14px] ml-[4px] border-2 [border-color:#4e8083_#cdf3f3_#cdf3f3_#4e8083] bg-[#86b8ba] flex flex-col">
                            <svg class="h-[13px] w-[10px]"><use href="#i-up" /></svg>
                            <div class="flex-1 bg-[#9bdadb] border-2 [border-color:#cdf3f3_#4e8083_#4e8083_#cdf3f3]"></div>
                            <svg class="h-[13px] w-[10px] rotate-180"><use href="#i-up" /></svg>
                        </div>
                        <div class="flex-1 border-l border-black font-bold px-[2px]">
                            <label for="res" class="block text-center leading-[22px]">Resolution</label>
                            <output for="res" class="block pl-[25px] leading-[22px]">1.0</output>
                            <input id="res" type="range" min="0" max="11" value="1" class="block appearance-none w-full h-[15px] bg-[#86b8ba] border-2 [border-color:#4e8083_#cdf3f3_#cdf3f3_#4e8083] [&::-webkit-slider-thumb]:appearance-none [&::-webkit-slider-thumb]:w-[30px] [&::-webkit-slider-thumb]:h-[11px] [&::-webkit-slider-thumb]:border-2 [&::-webkit-slider-thumb]:[border-color:#cdf3f3_#4e8083_#4e8083_#cdf3f3] [&::-webkit-slider-thumb]:bg-[linear-gradient(90deg,#9bdadb_12px,#4e8083_12px_13px,#cdf3f3_13px_15px,#9bdadb_15px)]">
                        </div>
                    </div>
                </div>
            </div>
            <!-- pane divider -->
            <div class="h-[9px] -mx-[4px] flex items-center"><span class="flex-1 h-[2px] border-t border-b [border-color:#a0f0dc_#2a7463]"></span><span class="w-[10px] h-[9px] border-2 [border-color:#a0f0dc_#2a7463_#2a7463_#a0f0dc]"></span><span class="w-[10px] h-[2px] border-t border-b [border-color:#a0f0dc_#2a7463]"></span></div>
            <!-- board overview -->
            <div class="flex-1 border border-black outline-2 outline-[#a0f0dc] flex items-center justify-center">
                <svg class="w-[50px] h-[122px]"><rect x="1" y="1" width="48" height="120" rx="2" fill="#9bdadb" stroke="#000" stroke-width="2" /><path d="M38 33h5M38 37h5M46 32v4" stroke="#000" fill="none" /><path d="M41 33h3v3h-3z" fill="#c030c0" /></svg>
            </div>
            <div class="flex gap-[3px] pt-[2px] h-[46px] items-start">
                <button aria-label="Delete" class="w-[31px] h-[38px] mt-[2px] flex items-center justify-center bg-[#9bdadb] border-2 [border-color:#cdf3f3_#4e8083_#4e8083_#cdf3f3]"><svg class="w-[24px] h-[24px]"><use href="#i-del" /></svg></button>
                <button aria-label="Reference" class="w-[31px] h-[38px] mt-[2px] flex items-center justify-center bg-[#9bdadb] border-2 [border-color:#cdf3f3_#4e8083_#4e8083_#cdf3f3]"><svg class="w-[24px] h-[24px]"><use href="#i-ref" /></svg></button>
                <p class="flex-1 h-[42px] bg-[#9bdadb] border border-black font-bold pl-[2px] leading-[40px]">62 measurements for 2 layers</p>
                <button aria-label="Zoom out map" class="w-[38px] h-[38px] mt-[2px] flex items-center justify-center bg-[#9bdadb] border-2 [border-color:#cdf3f3_#4e8083_#4e8083_#cdf3f3]"><svg class="w-[30px] h-[30px]" fill="none"><path d="M.5 .5h29v29H.5z" stroke="#000" /><path d="M4 4h12v12H4z" stroke="#1010e0" stroke-width="2" /><path d="M6 8h3v3h2V8h3v6H6z" fill="#e01010" /><path d="M19 19h7v7h-7z" stroke="#1010e0" stroke-width="2" /><path d="M18 6.500h7V15M23 13l2 3 2-3z" stroke="#000" /></svg></button>
                <button aria-label="Zoom in map" class="w-[38px] h-[38px] mt-[2px] flex items-center justify-center bg-[#9bdadb] border-2 [border-color:#cdf3f3_#4e8083_#4e8083_#cdf3f3]"><svg class="w-[30px] h-[30px]" fill="none"><path d="M.5 .5h29v29H.5z" stroke="#000" /><path d="M4 4h12v12H4z" stroke="#1010e0" stroke-width="2" /><path d="M6 8h3v3h2V8h3v6H6z" fill="#e01010" /><path d="M19 19h7v7h-7z" stroke="#1010e0" stroke-width="2" /><path d="M17 24.500H6.500V20M5 21l2-3 1 3z" stroke="#000" /></svg></button>
            </div>
        </div>
        <div class="bg-[#9bdadb] p-[2px] border-b border-[#2a5a5a]"><button class="block w-full h-[24px] border-2 [border-color:#cdf3f3_#4e8083_#4e8083_#cdf3f3] font-bold">Close</button></div>
    </section>

    <script>
        // layer list: [name, background class, has hand mark]
        const groups = [
            [["to", "bg-white", 1], ["ts", "bg-[#00a57c]", 0], ["cs", "bg-[#fcc44c]", 1],
            ...["2t", "3t", "4b", "5t", "6b", "7t", "8b", "9t", "10b", "11t", "12b", "13t", "14b", "15b"].map(n => ["sig" + n, "bg-[#fcc44c]", n != "10b" && n != "12b"]),
            ["ss", "bg-[#fcc44c]", 1], ["bs", "bg-[#00a57c]", 0], ["bo", "bg-white", 1]],
            [["drl", "bg-[#9fb6c2]"], ["bz9-5b", "bg-[#9fb6c2]"], ["laser1-2", "bg-[#9fb6c2]"], ["szdrl2-3", "bg-[#9fb6c2]"], ["laser15-16", "bg-[#9fb6c2]"], ["rout", "bg-[#dcdcdc]"]],
            ["cvia", "svia", "tp", "bp", "cslsh", "dk2-15t", "dk2-15b", "biaozhu", "d", "d2-15", "to.d", "ts.d", "cs.d",
                "sig2t.d", "sig3t.d", "sig4b.d", "sig5t.d", "sig6b.d", "sig7t.d", "sig8b.d", "sig9t.d", "sig10b.d", "sig11t.d", "sig12b.d", "sig13t.d", "sig14b.d", "sig15b.d"].map(n => [n, "bg-[#9bdadb]"])
        ];
        document.getElementById("layers").innerHTML = groups.map((g, i) => (i ? '<div class="h-[3px] my-[2px] bg-[#55ceae]"></div>' : '') + g.map(([name, bg, hand]) => {
            const on = name == "cs";
            return `<label class="flex h-[14px] mb-[2px] pl-[2px]">
                <input type="checkbox" class="appearance-none w-[14px] h-[14px] bg-white ${on ? "border-[3px] border-[#0000a0]" : "border-2 border-white shadow-[inset_0_0_0_2px_#000]"}">
                <span class="w-[14px] mx-[2px] ${on ? "bg-[#f00]" : ""}"></span>
                <span class="flex-1 mr-[5px] pl-[1px] overflow-hidden whitespace-nowrap flex items-center ${bg}"><span class="flex-1">${name}</span>${hand ? '<svg class="w-2 h-2 mr-[2px]"><use href="#i-hand" /></svg>' : ''}${on ? '<svg class="w-[6px] h-[6px] mr-[1px]" fill="none" stroke="#000"><path d="M.5 .5h5v5h-5zM3 0v6M0 3h6" stroke-width=".8" /></svg>' : ''}</span>
            </label>`;
        }).join("")).join("");

        // edge of the toolbox buttons
        document.getElementById("tools").innerHTML = ["bg-[#6a9a9a]", "bg-[#6a9a9a]", "bg-[#6a9a9a]", "bg-[#a02020]", "bg-[#c0c0c0]", "bg-[#808080]", "bg-[#808080]", "bg-[#808080]", "bg-[#808080]", "bg-[#d09a30]"]
            .map(c => `<div class="h-[38px] mb-[2px] mr-[2px] border-y-2 [border-color:#ddd_#444] ${c}"></div>`).join("");

        // round pads on a 95 px grid, then the free big ones
        const cols = [180, 275, 370, 465, 560, 655, 750, 845, 940, 1035];
        const rows = { 88: [0, 5, 7, 8, 9], 183: [0, 5, 7, 8, 9], 278: [0, 5, 7, 8, 9], 373: [0, 1, 2, 3, 4, 5, 7, 8, 9], 468: [6, 7, 8, 9], 563: [5, 6, 7, 8, 9], 659: [5, 6, 7, 8, 9], 754: [5, 6, 7, 8, 9] };
        const big = [[275, 183], [370, 278], [556, 139], [560, 285], [750, 132], [1123, 177], [1394, 241], [750, 278], [655, 468], [1156, 514], [1141, 659], [797, 849], [961, 851], [1106, 849], [962, 1034]];
        document.getElementById("pads").innerHTML =
            Object.entries(rows).map(([y, list]) => list.map(c => `<circle cx="${cols[c]}" cy="${y}" r="29" />`).join("")).join("") +
            big.map(([x, y]) => `<circle cx="${x}" cy="${y}" r="42" />`).join("");

        const categories = ["Pad to pad (5534)", "Pad to circuit (2426)", "Circuit to circuit (1003)", "Same Net Spacing (356)", "NPTH to pad (12)", "NPTH to circuit (16)", "PTH to Copper (3280)", "Shaved SMD (62)", "PTH (Comp) Annular ring (4)", "VIA Annular ring (5884)", "Spacing length (86)", "Pads (13164)", "Lines (403)", "Non standard rotated lines (16)", "Slivers (99)", "Local Spacing (62)", "SMD Pads (5053)", "SMD Pitch (136)", "SMD Packages (256)"];
        document.getElementById("categories").innerHTML = categories.map(c =>
            `<li class="h-[15px] mb-[3px] leading-[15px] ${c.startsWith("Shaved") ? "bg-black text-[#a0f0dc]" : ""}">${c}</li>`).join("");

        // histogram
        document.getElementById("stats").innerHTML = ["Count", "Average", "Sum", "Min", "Max"].map(s =>
            `<label class="flex items-center h-[27px] pl-[7px] gap-[7px]"><input type="radio" name="stat" ${s == "Min" ? "checked" : ""} class="appearance-none rotate-45 w-[10px] h-[10px] border-2 [border-color:#cdf3f3_#4e8083_#4e8083_#cdf3f3] checked:bg-[#d0004c] checked:[border-color:#4e8083_#cdf3f3_#cdf3f3_#4e8083]">${s}</label>`).join("");
        const bins = [["9.674", 38, "9-", "10"], ["10.7", 42, "10-", "11"], ["11.471", 46, "11-", "12"], ["25.422", 103, "25-", "26"], ["30.234", 123, "30-", "31"]];
        document.getElementById("bars").innerHTML = bins.map(([v, h]) =>
            `<div class="w-[55px]"><p class="text-center leading-[15px] font-bold ${v == "10.7" ? "text-[#e01818]" : ""}">${v}</p><div class="bg-[#b2ffff] border border-b-0 border-black -mr-px" style="height:${h}px"></div></div>`).join("");
        document.getElementById("ranges").innerHTML = bins.map(b =>
            `<div class="w-[55px]"><div class="h-[29px] -mr-px pt-[2px] bg-[#b2ffff] border border-black"><p class="pr-[10px] text-center">${b[2]}</p><p class="pl-[10px] text-center">${b[3]}</p></div></div>`).join("");

        // checklist actions
        const checks = [
            ["Signal Layer Ch", "Inner", "07:32 PM - 0:00:20", "14 layers were processed", "copper"],
            ["Power/Ground C", "P/G (Mils)", "07:32 PM - 0:00:01", "No power/ground layers processed", "power"],
            ["Signal Layer Ch", "Outer", "07:33 PM - 0:00:19", "2 layers were processed", "copper"],
            ["Solder Mask Ch", "Soldermask", "07:33 PM - 0:00:28", "2 solder mask layers were processed", "copper"],
            ["Silk Screen Che", "Silkscreen", "07:33 PM - 0:00:04", "No silkscreen layers processed", "copper"]
        ];
        const edge = "border-2 [border-color:#cdf3f3_#4e8083_#4e8083_#cdf3f3]";
        const green = "border-2 [border-color:#a0f0dc_#2a7463_#2a7463_#a0f0dc] bg-[#55ceae]";
        document.getElementById("checks").innerHTML = checks.map(([name, erf, time, msg, icon], i) => `
            <div class="h-[119px] ${i == 4 ? "" : "bg-[#9bdadb]"}">
                <div class="flex h-[31px] pl-[4px] pr-[2px] items-start bg-[#9bdadb]">
                    <label class="relative mt-[4px]"><input type="checkbox" checked aria-label="${name}" class="appearance-none block w-[13px] h-[13px] border [border-color:#4e8083_#cdf3f3_#cdf3f3_#4e8083]"><svg class="absolute left-0 -top-[1px] w-[13px] h-[13px]"><path d="M2 5l2 5 8-8" fill="none" stroke="#c0104c" stroke-width="2" /></svg></label>
                    <svg class="w-5 h-5 ml-[20px] mt-[4px]"><use href="#i-${icon}" /></svg>
                    <p class="ml-[3px] w-[104px] text-right whitespace-nowrap font-['Liberation_Serif',serif] font-bold text-[14px] leading-[28px]">${name}</p>
                    <label for="erf${i}" class="ml-[3px] w-[43px] h-[29px] text-center leading-[25px] ${edge}">ERF:</label>
                    <input id="erf${i}" type="text" value="${erf}" class="ml-[4px] w-[104px] h-[29px] pl-[5px] pb-[11px] bg-transparent border-2 [border-color:#4e8083_#cdf3f3_#cdf3f3_#4e8083]">
                    <button class="ml-auto w-[29px] h-[29px] p-[2px] ${edge}"><span class="block border border-black w-[21px] h-[21px] font-['Liberation_Sans',sans-serif] font-bold text-[20px] leading-[20px]">?</span></button>
                </div>
                <div class="bg-[#9bdadb] grid grid-cols-3 gap-[4px] px-[2px] pt-[3px] font-['Liberation_Serif',serif] font-bold">
                    <button class="h-[23px] leading-[19px] ${edge}">Parameters...</button>
                    <button class="h-[23px] leading-[19px] ${edge}">Ranges...</button>
                    <button class="h-[23px] leading-[19px] ${edge}">Online...</button>
                </div>
                <div class="bg-[#9bdadb] flex h-[36px] pt-[3px] pl-[2px] gap-[5px] items-center">
                    <button aria-label="Run" class="w-[29px] h-[29px] ${green}"><svg class="w-[25px] h-[25px]"><use href="#i-run" /></svg></button>
                    <button aria-label="Run on features" class="w-[29px] h-[29px] ${green} relative"><svg class="w-[25px] h-[25px]"><use href="#i-run" /><path d="M16 22h7M22 13l-6 7M17 14l5 5" stroke="#d01818" stroke-width="1.500" /></svg></button>
                    <button aria-label="Run on profile" class="w-[29px] h-[29px] ${green}"><svg class="w-[25px] h-[25px]"><use href="#i-run" /><path d="M2 2h6l2 2h4l2-2h7v6l-2 2v5l2 2v6H2v-6l2-2v-5L2 8z" fill="none" stroke="#d01818" stroke-width="1.500" /></svg></button>
                    <p class="w-[162px] text-center leading-[15px] whitespace-nowrap">29 Jan 2023<br>${time}</p>
                    <button aria-label="View results" class="ml-auto w-[29px] h-[29px] flex items-center justify-center ${green}"><svg class="w-[24px] h-[24px]"><use href="#i-zoom" /></svg></button>
                    <span class="w-[16px] h-[33px] -ml-[2px] border border-black text-center text-[12px] font-bold leading-[31px] ${i == 1 ? "bg-[#18e818]" : "bg-[#ff1818]"}">${i == 1 ? "" : "‼"}</span>
                </div>
                <p class="h-[21px] bg-[#ffffcf] border-t border-black pl-[2px] leading-[20px] whitespace-nowrap">${msg}</p>
                <div class="h-[2px] bg-black"></div>
            </div>`).join("");
    </script>
</body>

</html>
